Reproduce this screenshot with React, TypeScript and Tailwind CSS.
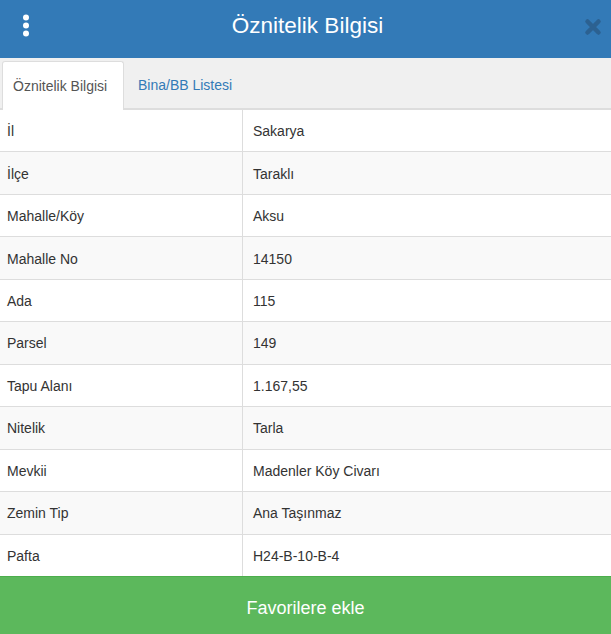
const rows: [string, string][] = [
  ['İl', 'Sakarya'],
  ['İlçe', 'Taraklı'],
  ['Mahalle/Köy', 'Aksu'],
  ['Mahalle No', '14150'],
  ['Ada', '115'],
  ['Parsel', '149'],
  ['Tapu Alanı', '1.167,55'],
  ['Nitelik', 'Tarla'],
  ['Mevkii', 'Madenler Köy Civarı'],
  ['Zemin Tip', 'Ana Taşınmaz'],
  ['Pafta', 'H24-B-10-B-4'],
];

export default function App() {
  return (
    <div className="w-[611px] h-[634px] flex flex-col bg-white text-[#333] font-['Liberation_Sans',Arial,sans-serif] text-[14px] overflow-hidden">
      <header className="h-[58px] shrink-0 bg-[#337ab7] grid grid-cols-[54px_1fr_50px] items-center pb-[6px]">
        <svg width="12" height="24" viewBox="0 0 12 24" className="text-white ml-[20px]">
          <circle cx="6" cy="3.5" r="3" fill="currentColor" />
          <circle cx="6" cy="11.5" r="3" fill="currentColor" />
          <circle cx="6" cy="19.5" r="3" fill="currentColor" />
        </svg>
        <h1 className="text-white text-[22.5px] leading-none text-center">Öznitelik Bilgisi</h1>
        <svg width="18" height="18" viewBox="0 0 18 18" className="text-[#2c6191] ml-[23px] mt-[2px]">
          <path d="M3.5 3.5 L14.5 14.5 M14.5 3.5 L3.5 14.5" stroke="currentColor" strokeWidth="4.5" strokeLinecap="round" />
        </svg>
      </header>

      <nav className="h-[52px] shrink-0 bg-[#f0f0f0] border-b-2 border-[#ddd] flex items-end pl-[2px]">
        <button className="h-[49px] w-[122px] bg-white border border-[#ddd] border-b-0 rounded-t-[3px] mb-[-2px] text-[#555] pt-[1px] pl-[10px] text-left">
          Öznitelik Bilgisi
        </button>
        <button className="h-[48px] pl-[14px] pr-[13px] text-[#337ab7] pt-[2px]">Bina/BB Listesi</button>
      </nav>

      <div className="flex-1 flex flex-col">
        {rows.map(([k, v], i) => (
          <div
            key={k}
            className={`flex-1 flex border-b border-[#ddd] last:border-b-0 ${i % 2 === 1 ? 'bg-[#f9f9f9]' : 'bg-white'}`}
          >
            <div className="w-[243px] shrink-0 border-r border-[#ddd] pl-[7px] pt-[2px] flex items-center">{k}</div>
            <div className="flex-1 pl-[10px] pt-[2px] flex items-center">{v}</div>
          </div>
        ))}
      </div>

      <button className="h-[58px] shrink-0 bg-[#5cb85c] text-white text-[18px] border-t border-[#4cae4c] pt-[5px]">
        Favorilere ekle
      </button>
    </div>
  );
}
